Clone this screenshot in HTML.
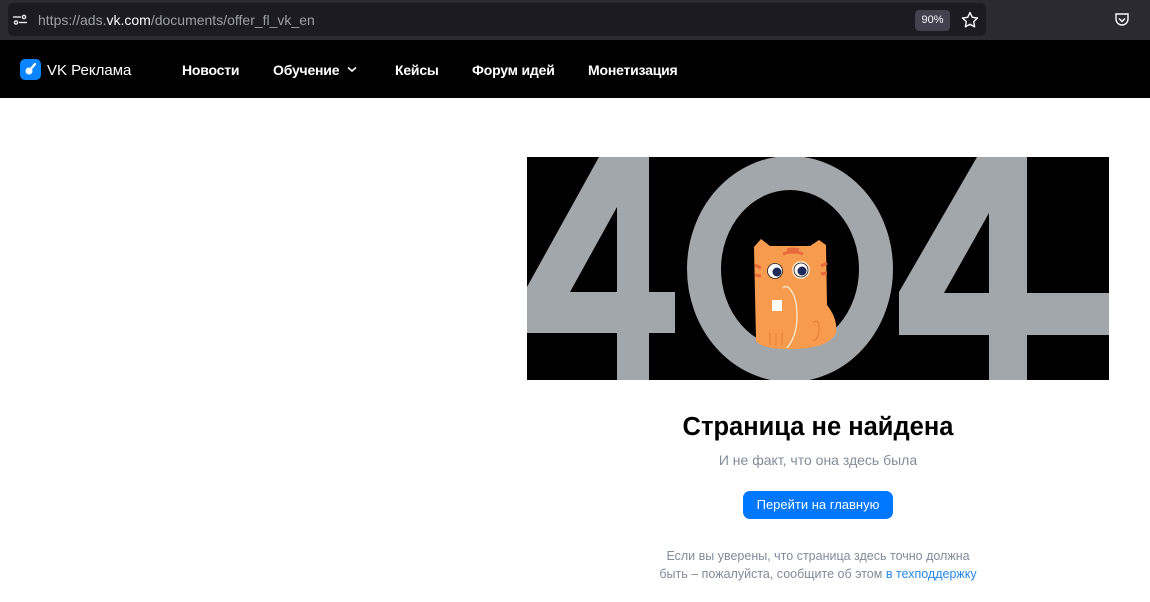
<!DOCTYPE html>
<html><head><meta charset="utf-8"><style>
*{margin:0;padding:0;box-sizing:border-box}
body{width:1150px;height:602px;overflow:hidden;background:#fff;font-family:"Liberation Sans","DejaVu Sans",sans-serif;position:relative}
.abs{position:absolute}
.bar{left:0;top:0;width:1150px;height:40px;background:#2b2a33}
.url{left:8px;top:3px;width:978px;height:33px;background:#1c1b22;border-radius:5px}
.nav{left:0;top:40px;width:1150px;height:58px;background:#000}
.nv{color:#fff;font-weight:bold;font-size:14px;top:62px;letter-spacing:-0.2px}
.c{left:527px;width:582px;text-align:center}
</style></head><body>
<div class="abs bar"></div>
<div class="abs url"></div>
<svg class="abs" style="left:12px;top:12px" width="16" height="16" viewBox="0 0 16 16" fill="none" stroke="#fbfbfe" stroke-width="1.3"><circle cx="4" cy="10.5" r="1.6"/><line x1="7" y1="10.5" x2="15" y2="10.5"/><circle cx="12" cy="5" r="1.6"/><line x1="1" y1="5" x2="9" y2="5"/></svg>
<div class="abs" style="left:38px;top:12px;font-size:14px;color:#9e9ea6">https://ads.<span style="color:#fbfbfe">vk.com</span>/documents/offer_fl_vk_en</div>
<div class="abs" style="left:915px;top:10px;width:35px;height:21px;background:#42414d;border-radius:4px;color:#fbfbfe;font-size:11px;text-align:center;line-height:21px">90%</div>
<svg class="abs" style="left:961px;top:11px" width="18" height="18" viewBox="0 0 18 18" fill="none" stroke="#fbfbfe" stroke-width="1.4" stroke-linejoin="round"><path d="M9 1.5l2.3 4.8 5.2.7-3.8 3.6.9 5.2L9 13.3l-4.6 2.5.9-5.2L1.5 7l5.2-.7z"/></svg>
<svg class="abs" style="left:1114px;top:12px" width="16" height="16" viewBox="0 0 16 16" fill="none" stroke="#fbfbfe" stroke-width="1.4"><path d="M2 2h12v5a6 6 0 0 1-12 0z"/><path d="M5 6.5l3 3 3-3"/></svg>
<div class="abs nav"></div>
<div class="abs" style="left:20px;top:59px;width:21px;height:21px;background:#0a84ff;border-radius:5px"></div>
<svg class="abs" style="left:20px;top:59px" width="21" height="21" viewBox="0 0 21 21"><circle cx="9" cy="12" r="3.5" fill="#fff"/><line x1="10" y1="11" x2="15" y2="5" stroke="#fff" stroke-width="2.2" stroke-linecap="round"/></svg>
<div class="abs" style="left:47px;top:62px;color:#fff;font-size:15px">VK Реклама</div>
<div class="abs nv" style="left:182px">Новости</div>
<div class="abs nv" style="left:273px">Обучение</div>
<svg class="abs" style="left:347px;top:66px" width="10" height="7" viewBox="0 0 10 7" fill="none" stroke="#fff" stroke-width="1.6"><path d="M1 1.5l4 3.5 4-3.5"/></svg>
<div class="abs nv" style="left:395px">Кейсы</div>
<div class="abs nv" style="left:472px">Форум идей</div>
<div class="abs nv" style="left:588px">Монетизация</div>

<svg class="abs" style="left:527px;top:155px" width="582" height="225" viewBox="0 0 582 225">
<defs><clipPath id="cl"><rect x="0" y="2" width="582" height="223"/></clipPath></defs>
<rect x="0" y="2" width="582" height="223" fill="#000"/>
<g clip-path="url(#cl)">
<g fill="#a2a7ac" fill-rule="evenodd">
<path d="M72 2H122V137H148V178H122V225H90V178H0V132ZM90 52V137H43Z"/>
<path d="M450 2H500V138H582V180H500V225H462V180H372V137ZM462 58V138H417Z"/>
</g>
<ellipse cx="263" cy="114" rx="86" ry="96" fill="none" stroke="#a2a7ac" stroke-width="34"/>
<path d="M227 92 L234 84 L243 91 L283 91 L292 85 L299 90 L300 150 Q311 164 309 178 Q302 193 268 194 Q236 195 229 186 Z" fill="#f79c4f"/>
<path d="M256 99q10-4 20 0M260 95q6-2 12 0" stroke="#e86a3c" stroke-width="3" fill="none"/>
<path d="M228 110l6 3M228 120l6 1M300 108l-6 3M300 118l-6 1" stroke="#e86a3c" stroke-width="3"/>
<circle cx="248" cy="116" r="7.5" fill="#fff" stroke="#222" stroke-width="0.8"/><circle cx="250" cy="117" r="4.5" fill="#1e2a5a"/>
<circle cx="274" cy="115" r="9" fill="#fce2c4"/><circle cx="274" cy="115" r="7" fill="#fff" stroke="#222" stroke-width="0.8"/><circle cx="275" cy="116" r="4.5" fill="#1e2a5a"/>
<path d="M256 133q3-3 6 0M262 133q8 8 8 28q0 20 -10 32" stroke="#fff2d8" stroke-width="1.2" fill="none"/>
<rect x="245" y="145" width="10" height="11" fill="#fff"/>
<path d="M286 168q6-6 6 6q0 10 -6 12M243 178v12M249 178v12M255 178v12" stroke="#e07c3c" fill="none"/>
</g>
</svg>

<div class="abs c" style="top:413px;font-size:25.5px;font-weight:bold;color:#000">Страница не найдена</div>
<div class="abs c" style="top:452px;font-size:14px;color:#818c99">И не факт, что она здесь была</div>
<div class="abs" style="left:743px;top:491px;width:150px;height:28px;background:#0077ff;border-radius:7px;color:#fff;font-size:13px;text-align:center;line-height:28px">Перейти на главную</div>
<div class="abs c" style="top:547px;font-size:12.5px;line-height:18px;color:#818c99">Если вы уверены, что страница здесь точно должна<br>быть – пожалуйста, сообщите об этом <span style="color:#2688eb">в техподдержку</span></div>
</body></html>
